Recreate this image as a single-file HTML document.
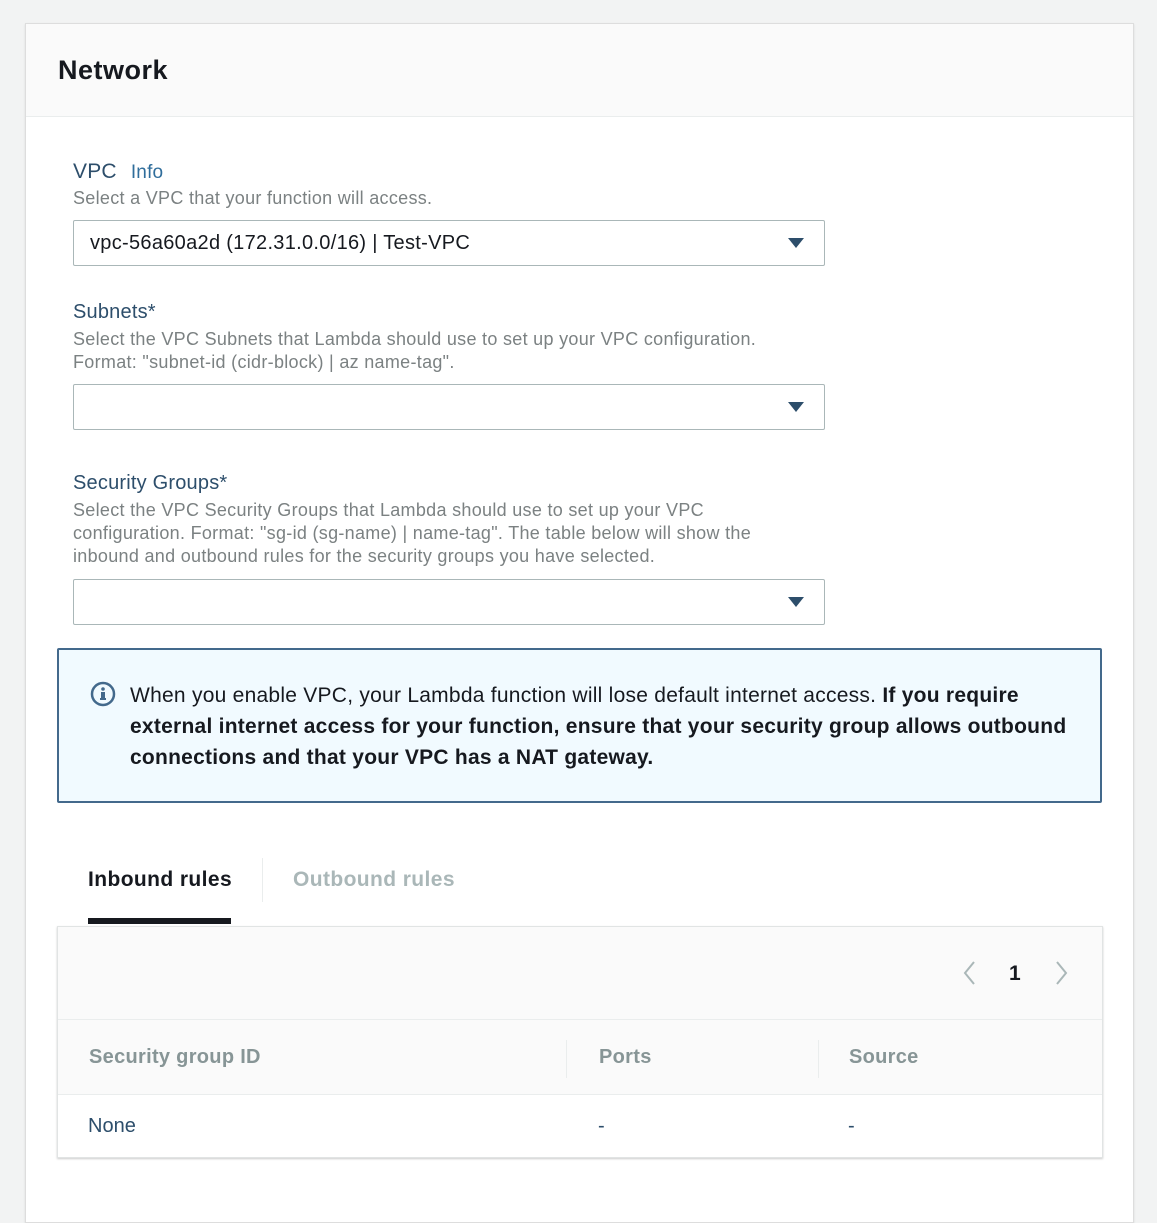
<!DOCTYPE html>
<html><head><style>
*{margin:0;padding:0;box-sizing:border-box}
body{width:1157px;height:1186px;background:#f2f3f3;font-family:"Liberation Sans",sans-serif;position:relative;overflow:hidden}
.a{position:absolute}
.card{left:25px;top:23px;width:1109px;height:1200px;background:#fff;border:1px solid #ddd;box-shadow:0 1px 2px rgba(0,0,0,.1)}
.hdr{left:26px;top:24px;width:1107px;height:93px;background:#fafafa;border-bottom:1px solid #eaeded}
.lbl{color:#2d4e6b;font-size:20px;letter-spacing:0.2px}
.desc{color:#7b8182;font-size:18px;line-height:23px;letter-spacing:0.3px}
.sel{left:73px;width:752px;height:46px;border:1px solid #aab7b8;border-radius:2px;background:#fff}
.tri{position:absolute;right:20px;top:17px;width:0;height:0;border-left:8px solid transparent;border-right:8px solid transparent;border-top:10px solid #2d4e6b}
.th{color:#879596;font-weight:bold;font-size:20px;top:1046px;letter-spacing:0.3px}
</style></head><body>
<div class="a card"></div>
<div class="a hdr"></div>
<div class="a" style="left:58px;top:55px;font-size:27px;font-weight:bold;color:#16191f;letter-spacing:0.5px">Network</div>

<div class="a lbl" style="left:73px;top:160px;font-size:21px">VPC <span style="font-size:19px;margin-left:8px;color:#2f6d9b">Info</span></div>
<div class="a desc" style="left:73px;top:187px">Select a VPC that your function will access.</div>
<div class="a sel" style="top:220px"><div style="position:absolute;left:16px;top:11px;font-size:20px;color:#16191f;letter-spacing:0.3px">vpc-56a60a2d (172.31.0.0/16) | Test-VPC</div><div class="tri"></div></div>

<div class="a lbl" style="left:73px;top:301px">Subnets*</div>
<div class="a desc" style="left:73px;top:328px">Select the VPC Subnets that Lambda should use to set up your VPC configuration.<br>Format: "subnet-id (cidr-block) | az name-tag".</div>
<div class="a sel" style="top:384px"><div class="tri"></div></div>

<div class="a lbl" style="left:73px;top:472px">Security Groups*</div>
<div class="a desc" style="left:73px;top:499px">Select the VPC Security Groups that Lambda should use to set up your VPC<br>configuration. Format: "sg-id (sg-name) | name-tag". The table below will show the<br>inbound and outbound rules for the security groups you have selected.</div>
<div class="a sel" style="top:579px"><div class="tri"></div></div>

<div class="a" style="left:57px;top:648px;width:1045px;height:155px;background:#f1faff;border:2px solid #43698c;border-radius:2px"></div>
<svg class="a" style="left:90px;top:681px" width="26" height="26" viewBox="0 0 26 26"><circle cx="13" cy="13" r="11" fill="none" stroke="#43698c" stroke-width="2.5"/><circle cx="13" cy="8" r="1.8" fill="#43698c"/><rect x="11" y="11" width="4" height="8" fill="#43698c"/><rect x="10" y="17" width="6" height="2" fill="#43698c"/></svg>
<div class="a" style="left:130px;top:680px;width:960px;font-size:21px;line-height:31px;color:#16191f;letter-spacing:0.25px">When you enable VPC, your Lambda function will lose default internet access. <b>If you require external internet access for your function, ensure that your security group allows outbound connections and that your VPC has a NAT gateway.</b></div>

<div class="a" style="left:88px;top:868px;font-size:21px;font-weight:bold;color:#16191f;letter-spacing:0.4px">Inbound rules</div>
<div class="a" style="left:262px;top:858px;width:1px;height:44px;background:#eaeded"></div>
<div class="a" style="left:293px;top:868px;font-size:21px;font-weight:bold;color:#aab7b8;letter-spacing:0.4px">Outbound rules</div>
<div class="a" style="left:88px;top:918px;width:143px;height:6px;background:#16191f"></div>

<div class="a" style="left:57px;top:926px;width:1046px;height:232px;background:#fafafa;border:1px solid #e1e4e4;box-shadow:0 1px 2px rgba(0,0,0,.2)"></div>
<div class="a" style="left:58px;top:1019px;width:1044px;height:1px;background:#eaeded"></div>
<div class="a" style="left:58px;top:1094px;width:1044px;height:63px;background:#fff;border-top:1px solid #eaeded"></div>
<svg class="a" style="left:962px;top:960px" width="14" height="26"><path d="M12 2 L3 13 L12 24" fill="none" stroke="#aab7b8" stroke-width="2"/></svg>
<div class="a" style="left:1009px;top:962px;font-size:21px;font-weight:bold;color:#16191f">1</div>
<svg class="a" style="left:1055px;top:960px" width="14" height="26"><path d="M2 2 L11 13 L2 24" fill="none" stroke="#aab7b8" stroke-width="2"/></svg>
<div class="a th" style="left:89px">Security group ID</div>
<div class="a" style="left:566px;top:1040px;width:1px;height:38px;background:#eaeded"></div>
<div class="a th" style="left:599px">Ports</div>
<div class="a" style="left:818px;top:1040px;width:1px;height:38px;background:#eaeded"></div>
<div class="a th" style="left:849px">Source</div>
<div class="a" style="left:88px;top:1115px;font-size:20px;color:#2d4e6b">None</div>
<div class="a" style="left:598px;top:1115px;font-size:20px;color:#2d4e6b">-</div>
<div class="a" style="left:848px;top:1115px;font-size:20px;color:#2d4e6b">-</div>
</body></html>
